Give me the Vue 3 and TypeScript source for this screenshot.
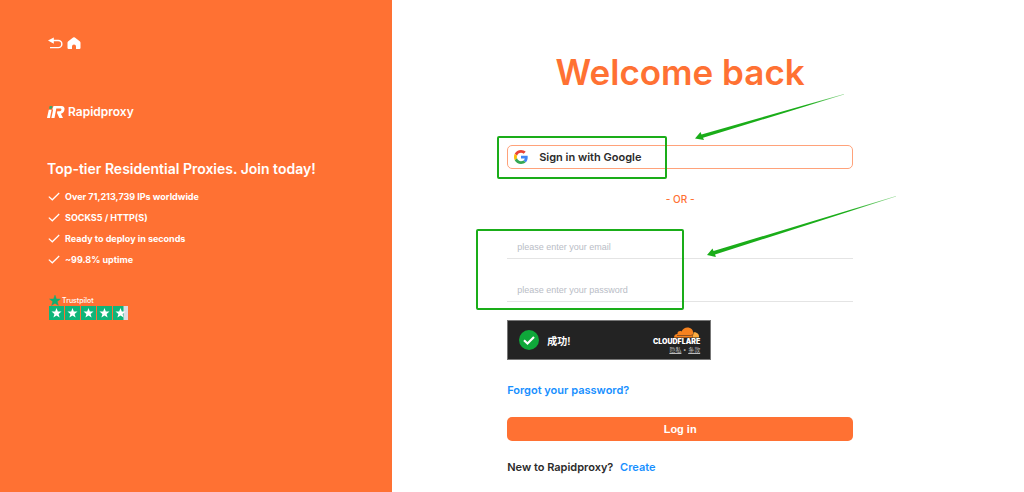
<script setup lang="ts">
import { ref } from 'vue'

const features: string[] = [
  'Over 71,213,739 IPs worldwide',
  'SOCKS5 / HTTP(S)',
  'Ready to deploy in seconds',
  '~99.8% uptime',
]
const starPath = 'M7.500 2 8.800 5.500 12.500 5.600 9.600 7.900 10.600 11.500 7.500 9.400 4.400 11.500 5.400 7.900 2.500 5.600 6.200 5.500Z'
const email = ref('')
const password = ref('')
</script>

<template>
  <div class="page">
    <aside class="promo">
      <nav class="nav">
        <a href="#" aria-label="Back">
          <svg width="15" height="13" viewBox="0 0 15 13">
            <path d="M4 3.500H10.300A3.500 3.500 0 0 1 10.300 10.600H2" fill="none" stroke="#fff" stroke-width="1.400" />
            <path d="M0 3.600 5.800.4V6.800Z" fill="#fff" />
          </svg>
        </a>
        <a href="#" aria-label="Home">
          <svg width="14" height="13" viewBox="0 0 14 13">
            <path d="M6.100.4Q7 0 7.900.4L13 4.600Q13.600 5.200 13.500 6V11Q13.400 12 12.400 12H9V9.400A2 2 0 0 0 5 9.400V12H1.600Q.6 12 .5 11V6Q.4 5.200 1 4.600Z" fill="#fff" />
          </svg>
        </a>
      </nav>
      <div class="brand">
        <svg width="18" height="14" viewBox="0 0 18 14">
          <path d="M2.700 1H5.500L4.800 3.800H2Z" fill="#35a96a" />
          <path d="M1.800 4.700H4.600L3 13H0Z" fill="#fff" />
          <path d="M6.500 1H14.300C17 1 18 2.700 17.400 5 17 7.200 15.600 8.300 13.900 8.800L16 13H12.400L10 8.100 10.300 6.300H13C14.600 6.300 15 3.600 13.400 3.600H9.300L7.500 13H4.400L6 5.200 5.400 4.100Z" fill="#fff" />
        </svg>
        <span>Rapidproxy</span>
      </div>
      <h2 class="tagline">Top-tier Residential Proxies. Join today!</h2>
      <ul class="features">
        <li v-for="item in features" :key="item">
          <svg width="12" height="9" viewBox="0 0 12 9">
            <path d="M.8 4.600 4.300 7.800 11.200 1" fill="none" stroke="#fff" stroke-width="1.200" />
          </svg>
          <span>{{ item }}</span>
        </li>
      </ul>
      <div class="trust">
        <div class="trust-name">
          <svg width="12" height="12" viewBox="2 1 11 11">
            <path :d="starPath" fill="#12ad70" stroke="#12ad70" stroke-width=".4" />
          </svg>
          <span>Trustpilot</span>
        </div>
        <div class="stars" role="img" aria-label="4.5 out of 5">
          <svg v-for="n in 5" :key="n" width="15" height="14" viewBox="0 0 15 14">
            <path d="M0 0H15V14H0Z" fill="#0fb579" />
            <path v-if="n === 5" d="M10.500 0H15V14H10.500Z" fill="#dcdce6" />
            <path :d="starPath" fill="#fff" />
          </svg>
        </div>
      </div>
    </aside>

    <main class="panel">
      <form class="form" @submit.prevent>
        <h1>Welcome back</h1>

        <div class="google-wrap">
          <button type="button" class="google">
            <svg width="14" height="14" viewBox="0 0 48 48">
              <path fill="#EA4335" d="M24 9.500c3.500 0 6.700 1.200 9.200 3.600l6.900-6.900C35.900 2.400 30.500 0 24 0 14.600 0 6.500 5.400 2.600 13.200l8 6.200C12.400 13.700 17.700 9.500 24 9.500z" />
              <path fill="#4285F4" d="M47 24.500c0-1.600-.2-3.100-.4-4.500H24v9h12.900c-.6 3-2.200 5.500-4.700 7.200l7.700 6C44.400 38 47 31.800 47 24.500z" />
              <path fill="#FBBC05" d="M10.500 28.600c-.5-1.500-.8-3-.8-4.600s.3-3.100.8-4.600l-8-6.200C.9 16.500 0 20.100 0 24s.9 7.500 2.600 10.800z" />
              <path fill="#34A853" d="M24 48c6.500 0 11.900-2.100 15.900-5.800l-7.700-6c-2.200 1.500-4.900 2.300-8.200 2.300-6.300 0-11.600-4.200-13.500-9.900l-8 6.200C6.500 42.600 14.600 48 24 48z" />
            </svg>
            <span>Sign in with Google</span>
          </button>
          <div class="mark mark-google"></div>
          <svg class="arrow arrow-google" width="150" height="50" viewBox="0 0 150 50">
            <defs>
              <linearGradient id="fade-a" x1="0" x2="1">
                <stop offset=".75" stop-color="#1aad19" />
                <stop offset="1" stop-color="#1aad19" stop-opacity=".5" />
              </linearGradient>
            </defs>
            <path d="M0 44.500 5.500 38 6.500 40.500 149 0V.6L8 43.800 9 46Z" fill="url(#fade-a)" />
          </svg>
        </div>

        <p class="or">- OR -</p>

        <div class="fields">
          <input v-model="email" type="email" placeholder="please enter your email" aria-label="Email" />
          <input v-model="password" type="password" placeholder="please enter your password" aria-label="Password" />
          <div class="mark mark-fields"></div>
          <svg class="arrow arrow-fields" width="190" height="62" viewBox="0 0 190 62">
            <defs>
              <linearGradient id="fade-b" x1="0" x2="1">
                <stop offset=".75" stop-color="#1aad19" />
                <stop offset="1" stop-color="#1aad19" stop-opacity=".45" />
              </linearGradient>
            </defs>
            <path d="M0 59 5.500 52.500 6.500 55 189 0V.6L8 58.500 9 61Z" fill="url(#fade-b)" />
          </svg>
        </div>

        <div class="captcha">
          <svg width="20" height="20" viewBox="0 0 20 20">
            <circle cx="10" cy="10" r="10" fill="#0fa83a" />
            <path d="M5 10.200 8.500 13.500 15 7" fill="none" stroke="#fff" stroke-width="2.200" />
          </svg>
          <span class="captcha-text">成功!</span>
          <div class="cloudflare">
            <svg width="26" height="11" viewBox="0 0 26 11">
              <path d="M0 10.500C0 8 1.500 7 3.500 7 3 4.500 6 3.500 7.500 4.500 9 1 12 0 14.500.5 17.500 1 19 3 19.200 5.500L18.500 10.500Z" fill="#f6821f" />
              <path d="M19.700 5.300C23 4.900 25.500 7.500 25 10.500H18.600L19 8.500Z" fill="#fbad41" />
              <path d="M3 8.500H16.500L19 7.800" fill="none" stroke="#252525" stroke-width=".5" />
            </svg>
            <strong>CLOUDFLARE</strong>
            <small><a href="#">隐私</a> • <a href="#">条款</a></small>
          </div>
        </div>

        <a class="forgot" href="#">Forgot your password?</a>
        <button type="submit" class="login">Log in</button>
        <p class="signup">New to Rapidproxy? <a href="#">Create</a></p>
      </form>
    </main>
  </div>
</template>

<style>
body {
  margin: 0;
}
</style>

<style scoped>
* {
  box-sizing: border-box;
}
.page {
  display: flex;
  min-height: 100vh;
  font-family: Inter, "Noto Sans CJK SC", sans-serif;
  font-weight: 600;
  background: #fff;
  color: #2b2b2b;
}
svg {
  display: block;
  flex: none;
}
h1,
h2,
p,
ul {
  margin: 0;
  padding: 0;
}
a {
  color: #1890ff;
  text-decoration: none;
}
.promo {
  flex: 0 0 38.3%;
  padding: 37px 24px 24px 47px;
  background: #ff7133;
  color: #fff;
}
.nav {
  display: flex;
  gap: 4px;
  padding-left: 1px;
}
.brand {
  display: flex;
  align-items: center;
  gap: 3px;
  height: 16px;
  margin-top: 54px;
  font-size: 12px;
  line-height: 16px;
}
.tagline {
  margin-top: 39px;
  font-size: 14px;
  font-weight: 600;
  line-height: 20px;
}
.features {
  display: grid;
  margin-top: 7px;
  list-style: none;
  font-size: 9px;
  font-weight: 700;
  line-height: 21px;
}
.features li {
  display: flex;
  align-items: center;
  gap: 5px;
  padding-left: 1px;
}
.trust {
  margin-top: 24px;
  padding-left: 2px;
}
.trust-name {
  display: flex;
  align-items: center;
  gap: 1px;
  height: 12px;
  font-size: 7px;
  font-weight: 500;
}
.stars {
  display: flex;
  gap: 1px;
}
.panel {
  flex: 1;
  padding: 48px 24px 16px 115px;
}
.form {
  display: flex;
  flex-direction: column;
  max-width: 70.2%;
}
h1 {
  color: #ff7133;
  font-size: 35px;
  font-weight: 600;
  line-height: 48px;
  text-align: center;
  white-space: nowrap;
}
.google-wrap,
.fields {
  position: relative;
}
.google-wrap {
  margin-top: 49px;
}
.google {
  display: flex;
  align-items: center;
  gap: 11px;
  width: 100%;
  height: 24px;
  padding: 0 6px;
  border: 1px solid #ffa27a;
  border-radius: 5px;
  background: #fff;
  color: #2b2b2b;
  font: inherit;
  font-size: 11px;
}
.mark {
  position: absolute;
  border: 2px solid #1aad19;
  border-radius: 2px;
  pointer-events: none;
}
.mark-google {
  left: -10px;
  top: -9px;
  width: 170px;
  height: 43px;
}
.mark-fields {
  left: -31px;
  top: -6px;
  width: 208px;
  height: 81px;
}
.arrow {
  position: absolute;
  pointer-events: none;
}
.arrow-google {
  left: 188px;
  top: -51px;
}
.arrow-fields {
  left: 200px;
  top: -39px;
}
.or {
  margin-top: 22px;
  color: #ff7133;
  font-size: 10px;
  font-weight: 500;
  line-height: 16px;
  text-align: center;
}
.fields {
  display: grid;
  gap: 19px;
  margin-top: 28px;
}
input {
  width: 100%;
  height: 24px;
  padding: 0 10px;
  border: 0;
  border-bottom: 1px solid #e4e4e4;
  background: transparent;
  font: 400 9px "Liberation Sans", Arial, sans-serif;
}
input::placeholder {
  color: #b9bdc6;
}
.captcha {
  display: flex;
  align-items: center;
  width: 204px;
  height: 40px;
  margin-top: 18px;
  padding: 0 10px 0 11px;
  border: 1px solid #777;
  background: #232323;
  color: #fff;
}
.captcha-text {
  margin-left: 8px;
  font-size: 10px;
}
.cloudflare {
  display: flex;
  flex-direction: column;
  align-items: flex-end;
  margin-left: auto;
}
.cloudflare strong {
  font-size: 7px;
  font-weight: 900;
  line-height: 7px;
}
.cloudflare small {
  color: #bbb;
  font-size: 6px;
  font-weight: 400;
  line-height: 9px;
}
.cloudflare a {
  color: #bbb;
  text-decoration: underline;
}
.forgot {
  align-self: flex-start;
  margin-top: 22px;
  font-size: 11px;
  line-height: 16px;
}
.login {
  height: 24px;
  margin-top: 19px;
  border: 0;
  border-radius: 5px;
  background: #ff7133;
  color: #fff;
  font: 700 11px "Liberation Sans", Arial, sans-serif;
}
.signup {
  margin-top: 18px;
  font-size: 11px;
  line-height: 16px;
}
.signup a {
  margin-left: 4px;
}
</style>
